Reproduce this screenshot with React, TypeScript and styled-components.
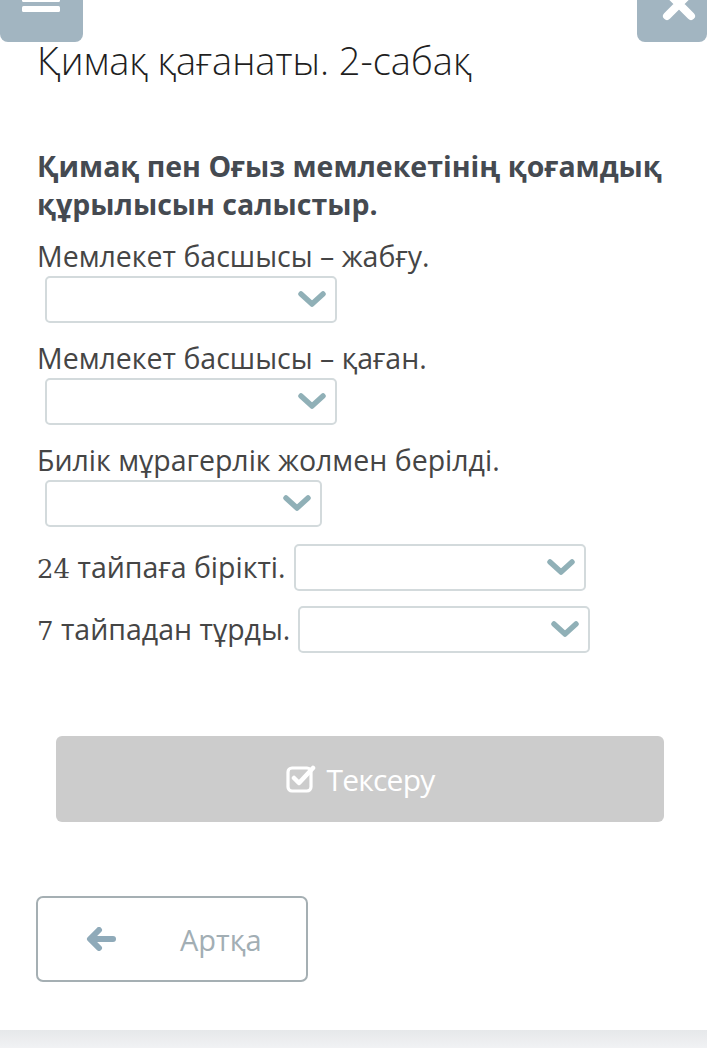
import React from "react";
import styled, { createGlobalStyle } from "styled-components";

const Global = createGlobalStyle`
  html, body { margin: 0; padding: 0; background: #ffffff; }
  body { font-family: "Open Sans", "Noto Sans", sans-serif; }
`;

const Page = styled.div`
  width: 707px;
  height: 1048px;
  display: flex;
  flex-direction: column;
  background: #fff;
  overflow: hidden;
`;

const TopBar = styled.div`
  height: 42px;
  display: flex;
  justify-content: space-between;
  align-items: flex-end;
  overflow: hidden;
  flex-shrink: 0;
`;

const TopButton = styled.div<{ $side: "left" | "right" }>`
  width: ${(p) => (p.$side === "left" ? 83 : 70)}px;
  height: 70px;
  background: #a2b5c1;
  border-radius: 8px;
  display: flex;
  align-items: flex-start;
  padding-left: ${(p) => (p.$side === "left" ? 22 : 25)}px;
  padding-top: ${(p) => (p.$side === "left" ? 14 : 15)}px;
  box-sizing: border-box;
`;

const Content = styled.div`
  padding: 0 37px;
  display: flex;
  flex-direction: column;
`;

const Title = styled.h1`
  margin: 0;
  font-size: 38px;
  line-height: 36px;
  font-weight: 300;
  color: #1f1f1f;
  white-space: nowrap;
`;

const Question = styled.h2`
  margin: 69px 0 0;
  font-size: 28.5px;
  line-height: 38px;
  font-weight: 700;
  color: #454a51;
`;

const Label = styled.div`
  font-size: 28.5px;
  line-height: 36px;
  font-weight: 400;
  color: #454545;
  white-space: nowrap;
`;

const Block = styled.div<{ $mt: number }>`
  margin-top: ${(p) => p.$mt}px;
  display: flex;
  flex-direction: column;
`;

const InlineRow = styled.div<{ $mt: number }>`
  margin-top: ${(p) => p.$mt}px;
  display: flex;
  align-items: center;
  gap: 8px;
`;

const Digits = styled.span`
  font-family: "DejaVu Serif", serif;
  font-size: 26px;
`;

const Select = styled.div<{ $w: number; $ml?: number }>`
  width: ${(p) => p.$w}px;
  height: 47px;
  margin-left: ${(p) => p.$ml ?? 0}px;
  margin-top: 2px;
  border: 2px solid #d3dadc;
  border-radius: 5px;
  box-sizing: border-box;
  display: flex;
  align-items: center;
  justify-content: flex-end;
  padding-right: 9px;
  background: #fff;
  flex-shrink: 0;
`;

const InlineSelect = styled(Select)`
  margin-top: 0;
`;

const CheckButton = styled.div`
  margin: 0 43px 0 56px;
  height: 86px;
  background: #cccccc;
  border-radius: 6px;
  display: flex;
  align-items: center;
  justify-content: center;
  gap: 11px;
  color: #fff;
  font-size: 30px;
  letter-spacing: -0.8px;
  font-weight: 400;
`;

const BackButton = styled.div`
  margin-left: 36px;
  width: 272px;
  height: 86px;
  border: 2px solid #a5afb3;
  border-radius: 7px;
  box-sizing: border-box;
  display: flex;
  align-items: center;
  padding-left: 48px;
  gap: 64px;
  color: #a2aeb4;
  font-size: 29px;
`;

const Spacer = styled.div`
  flex: 1;
`;

const Footer = styled.div`
  height: 18px;
  background: linear-gradient(#e6e8ea, #f1f2f4);
  flex-shrink: 0;
`;

const Chevron = () => (
  <svg width="28" height="18" viewBox="0 0 28 18">
    <path d="M3 3 L14 13 L25 3" fill="none" stroke="#90b0b7" strokeWidth="5.5" strokeLinecap="round" strokeLinejoin="round" />
  </svg>
);

const Bars = () => (
  <svg width="38" height="30" viewBox="0 0 38 30">
    <rect x="0" y="0" width="38" height="6" rx="1.5" fill="#fff" />
    <rect x="0" y="10" width="38" height="6" rx="1.5" fill="#fff" />
    <rect x="0" y="20" width="38" height="6" rx="1.5" fill="#fff" />
  </svg>
);

const Cross = () => (
  <svg width="34" height="34" viewBox="0 0 34 34">
    <path d="M5 5 L29 29 M29 5 L5 29" stroke="#fff" strokeWidth="8" strokeLinecap="round" />
  </svg>
);

const CheckSquare = () => (
  <svg width="30" height="28" viewBox="0 0 30 28">
    <rect x="2" y="3" width="23" height="23" rx="4" fill="none" stroke="#fff" strokeWidth="3.2" />
    <path d="M8 13 L13 18 L27 3" fill="none" stroke="#fff" strokeWidth="4.5" strokeLinecap="round" strokeLinejoin="round" />
  </svg>
);

const ArrowLeft = () => (
  <svg width="30" height="24" viewBox="0 0 30 24">
    <path d="M13 3 L4 12 L13 21" fill="none" stroke="#8faab9" strokeWidth="6" strokeLinecap="round" strokeLinejoin="round" />
    <path d="M6 12 L27 12" stroke="#8faab9" strokeWidth="6" strokeLinecap="round" />
  </svg>
);

export default function App() {
  return (
    <Page>
      <Global />
      <TopBar>
        <TopButton $side="left">
          <Bars />
        </TopButton>
        <TopButton $side="right">
          <Cross />
        </TopButton>
      </TopBar>
      <Content>
        <Title>Қимақ қағанаты. 2-сабақ</Title>
        <Question>Қимақ пен Оғыз мемлекетінің қоғамдық құрылысын салыстыр.</Question>
        <Block $mt={15}>
          <Label>Мемлекет басшысы – жабғу.</Label>
          <Select $w={292} $ml={8}>
            <Chevron />
          </Select>
        </Block>
        <Block $mt={17}>
          <Label>Мемлекет басшысы – қаған.</Label>
          <Select $w={292} $ml={8}>
            <Chevron />
          </Select>
        </Block>
        <Block $mt={17}>
          <Label>Билік мұрагерлік жолмен берілді.</Label>
          <Select $w={277} $ml={8}>
            <Chevron />
          </Select>
        </Block>
        <InlineRow $mt={17}>
          <Label>
            <Digits>24</Digits> тайпаға бірікті.
          </Label>
          <InlineSelect $w={292}>
            <Chevron />
          </InlineSelect>
        </InlineRow>
        <InlineRow $mt={15}>
          <Label>
            <Digits>7</Digits> тайпадан тұрды.
          </Label>
          <InlineSelect $w={292}>
            <Chevron />
          </InlineSelect>
        </InlineRow>
      </Content>
      <Block $mt={83}>
        <CheckButton>
          <CheckSquare />
          <span>Тексеру</span>
        </CheckButton>
      </Block>
      <Block $mt={74}>
        <BackButton>
          <ArrowLeft />
          <span>Артқа</span>
        </BackButton>
      </Block>
      <Spacer />
      <Footer />
    </Page>
  );
}
